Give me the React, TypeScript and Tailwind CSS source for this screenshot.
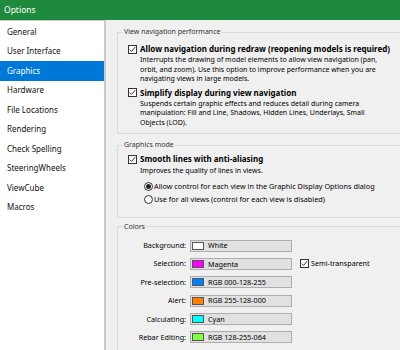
const NAV_ITEMS = [
  "General",
  "User Interface",
  "Graphics",
  "Hardware",
  "File Locations",
  "Rendering",
  "Check Spelling",
  "SteeringWheels",
  "ViewCube",
  "Macros",
];

const COLOR_ROWS = [
  { label: "Background:", swatch: "bg-white", value: "White" },
  { label: "Selection:", swatch: "bg-[#ff00ff]", value: "Magenta", semi: true },
  { label: "Pre-selection:", swatch: "bg-[#0080ff]", value: "RGB 000-128-255" },
  { label: "Alert:", swatch: "bg-[#ff8000]", value: "RGB 255-128-000" },
  { label: "Calculating:", swatch: "bg-[#00ffff]", value: "Cyan" },
  { label: "Rebar Editing:", swatch: "bg-[#80ff40]", value: "RGB 128-255-064" },
];

function CheckBox() {
  return (
    <span className="flex h-[9px] w-[9px] shrink-0 items-center justify-center border border-[#333] bg-white">
      <svg viewBox="0 0 7 7" className="h-[7px] w-[7px]">
        <path d="M0.8 3.6 L2.6 5.4 L6.3 0.9" fill="none" stroke="#222" strokeWidth="0.9" />
      </svg>
    </span>
  );
}

function Radio({ checked }: { checked?: boolean }) {
  return (
    <span className="flex h-[9px] w-[9px] shrink-0 items-center justify-center rounded-full border border-[#333] bg-white">
      {checked && <span className="h-[5px] w-[5px] rounded-full bg-[#222]" />}
    </span>
  );
}

function Group({
  title,
  className,
  children,
}: {
  title: string;
  className?: string;
  children: React.ReactNode;
}) {
  return (
    <fieldset className={`mr-[-20px] border border-[#dcdcdc] p-0 ${className ?? ""}`}>
      <legend className="ml-[5px] px-px text-[7px] leading-[10px] text-[#333]">{title}</legend>
      {children}
    </fieldset>
  );
}

export default function App() {
  return (
    <div className="flex h-[350px] w-[400px] flex-col overflow-hidden bg-[#f0f0f0] font-['Noto_Sans',sans-serif] text-black">
      <div className="flex h-[20px] shrink-0 items-center bg-[#1f8a3d] pl-[4px] text-[8.5px] text-white">
        Options
      </div>

      <div className="flex min-h-0 flex-1">
        <nav className="w-[106px] shrink-0 border-t border-r-2 border-[#c9c9c9] bg-white pt-[1px]">
          {NAV_ITEMS.map((item) => (
            <div
              key={item}
              className={`flex h-[19.5px] items-center pl-[7px] text-[8px] ${
                item === "Graphics" ? "bg-[#0078d7] text-white" : "text-[#111]"
              }`}
            >
              {item}
            </div>
          ))}
        </nav>

        <main className="min-w-0 flex-1 overflow-hidden pl-[11px] pt-[7px] text-[7px]">
          <Group title="View navigation performance">
            <div className="pb-[6px] pl-[10px] pt-[7px]">
              <div className="flex h-[10px] items-center gap-[3px]">
                <CheckBox />
                <span className="text-[8px] font-bold">
                  Allow navigation during redraw (reopening models is required)
                </span>
              </div>
              <p className="mt-px w-[255px] pl-[12px] leading-[9.5px]">
                Interrupts the drawing of model elements to allow view navigation (pan,
                orbit, and zoom). Use this option to improve performance when you are
                navigating views in large models.
              </p>
              <div className="mt-[4px] flex h-[10px] items-center gap-[3px]">
                <CheckBox />
                <span className="text-[8px] font-bold">Simplify display during view navigation</span>
              </div>
              <p className="mt-px w-[255px] pl-[12px] leading-[9.5px]">
                Suspends certain graphic effects and reduces detail during camera
                manipulation: Fill and Line, Shadows, Hidden Lines, Underlays, Small
                Objects (LOD).
              </p>
            </div>
          </Group>

          <Group title="Graphics mode" className="mt-[6px]">
            <div className="pb-[12px] pl-[10px] pt-[4px]">
              <div className="flex h-[10px] items-center gap-[3px]">
                <CheckBox />
                <span className="text-[8px] font-bold">Smooth lines with anti-aliasing</span>
              </div>
              <p className="mt-[2px] pl-[12px] leading-[9.5px]">Improves the quality of lines in views.</p>
              <div className="mt-[6px] flex h-[10px] items-center gap-[1px] pl-[16px] text-[7.3px]">
                <Radio checked />
                <span>Allow control for each view in the Graphic Display Options dialog</span>
              </div>
              <div className="mt-[3px] flex h-[10px] items-center gap-[1px] pl-[16px] text-[7.3px]">
                <Radio />
                <span>Use for all views (control for each view is disabled)</span>
              </div>
            </div>
          </Group>

          <Group title="Colors" className="mt-[4px]">
            <div className="flex flex-col gap-[6.4px] pb-[10px] pt-[8px] text-[7.2px]">
              {COLOR_ROWS.map((row) => (
                <div key={row.label} className="flex h-[12px] items-center">
                  <span className="w-[68px] text-right">{row.label}</span>
                  <div className="ml-[4px] flex h-[12px] w-[102px] items-center border border-[#adadad] bg-[#e1e1e1] pl-[1px]">
                    <span className={`h-[8px] w-[12px] border border-[#555] ${row.swatch}`} />
                    <span className="ml-[4px]">{row.value}</span>
                  </div>
                  {row.semi && (
                    <div className="ml-[8px] flex items-center gap-[2px]">
                      <CheckBox />
                      <span>Semi-transparent</span>
                    </div>
                  )}
                </div>
              ))}
            </div>
          </Group>
        </main>
      </div>
    </div>
  );
}
